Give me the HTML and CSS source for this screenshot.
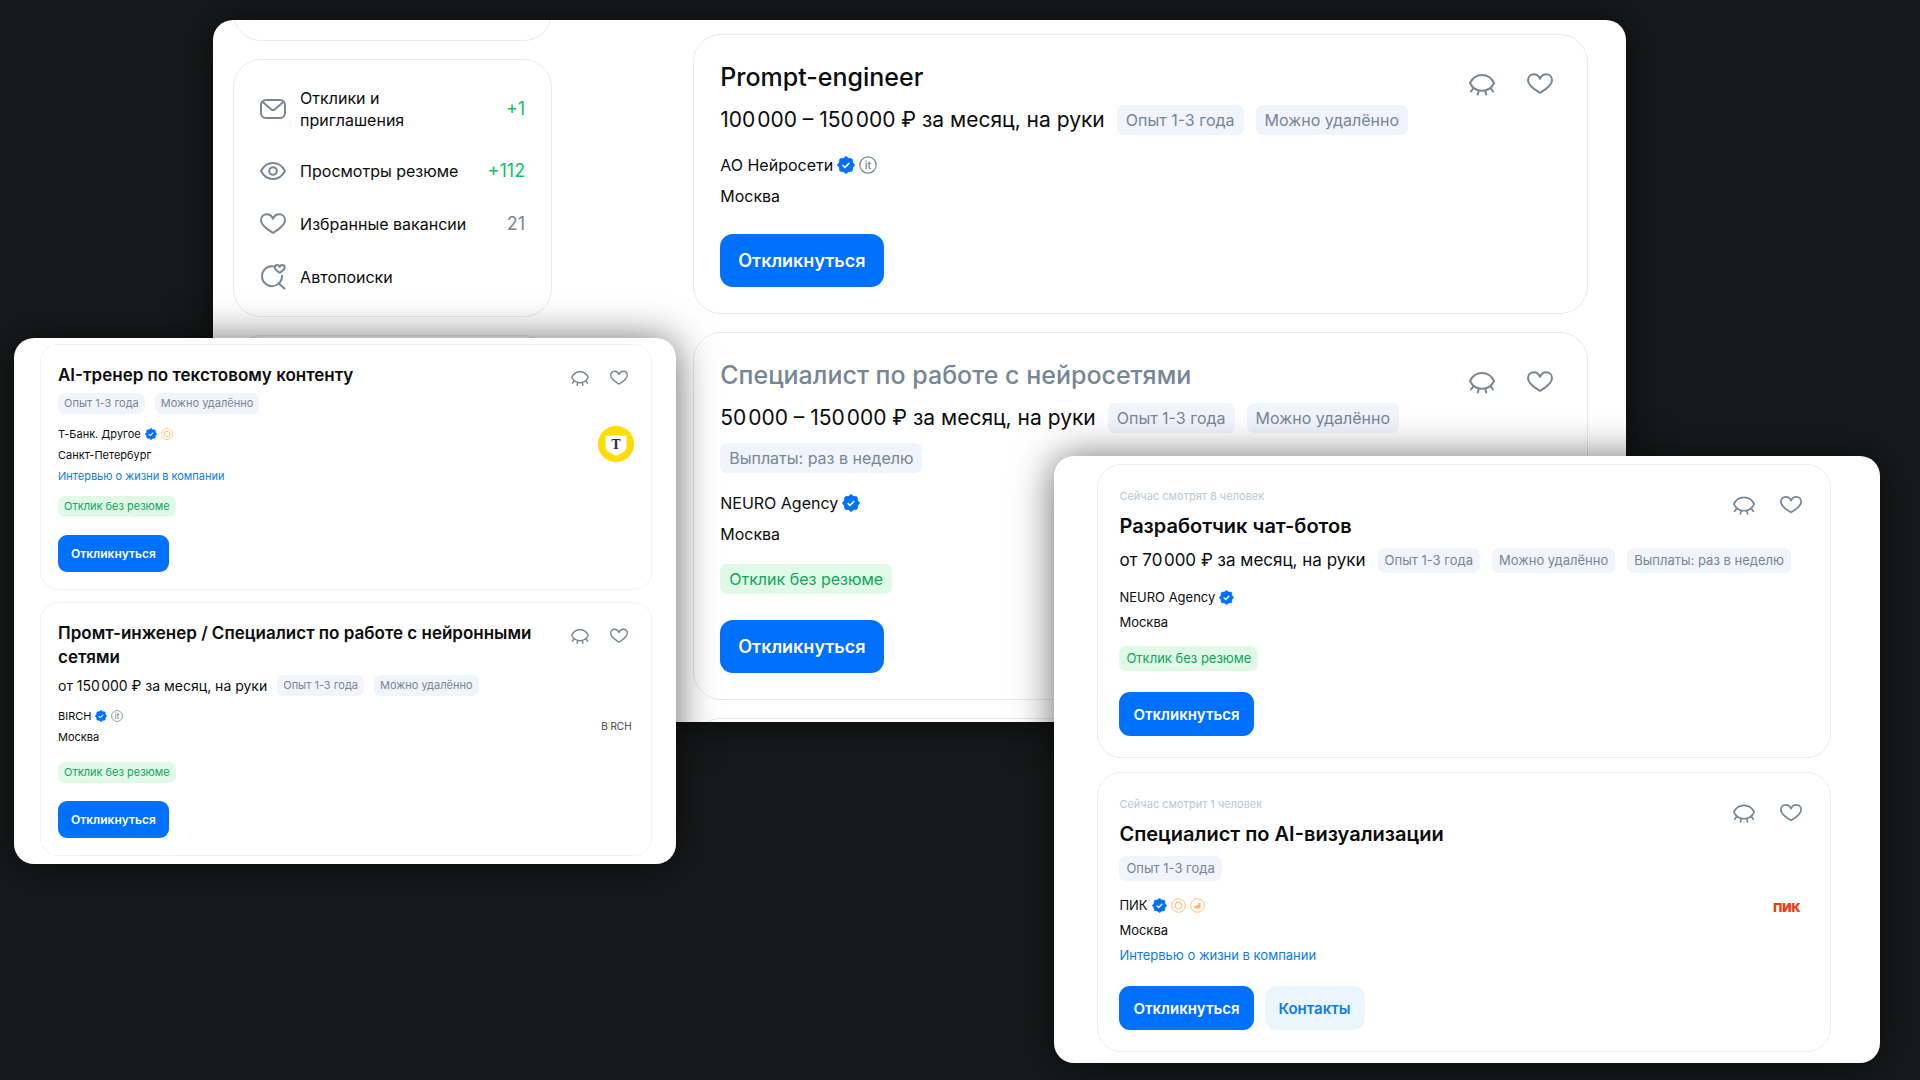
FILE: index.html
```html
<!DOCTYPE html>
<html lang="ru">
<head>
    <meta charset="UTF-8">
    <meta name="viewport" content="width=device-width, initial-scale=1.0">
    <title>Вакансии</title>
    <link rel="stylesheet" href="styles.css">
</head>
<body>
    <!-- Общие иконки -->
    <svg class="sprite" aria-hidden="true">
        <symbol id="i-heart" viewBox="0 0 26 26">
            <path d="M13 21.800C9.300 19.500 1 15.100 1 9.200C1 5.500 3.600 3.300 6.700 3.300C9.600 3.300 11.900 5 13 7.800C14.100 5 16.400 3.300 19.300 3.300C22.400 3.300 25 5.500 25 9.200C25 15.100 16.700 19.500 13 21.800Z"/>
        </symbol>
        <symbol id="i-hide" viewBox="0 0 26 26">
            <path d="M1 12C3.300 7.200 7.800 4 13 4S22.700 7.200 25 12C22.700 16.800 18.200 19.800 13 19.800S3.300 16.800 1 12ZM4.500 17L2 20.500M9.800 19.500L8.800 23.500M16.200 19.500L17.200 23.500M21.500 17L24 20.500"/>
        </symbol>
        <symbol id="i-eye" viewBox="0 0 26 26">
            <path d="M1 13C3.600 8 8 5 13 5S22.400 8 25 13C22.400 18 18 21 13 21S3.600 18 1 13Z"/>
            <circle cx="13" cy="13" r="3.800"/>
        </symbol>
        <symbol id="i-mail" viewBox="0 0 26 26">
            <rect x="1" y="4" width="24" height="18" rx="5"/>
            <path d="M2.500 5.800L11.300 13.400Q13 14.800 14.700 13.400L23.500 5.800"/>
        </symbol>
        <symbol id="i-search" viewBox="0 0 26 26">
            <path d="M13 2.200H11.500A10 10 0 1 0 22 12.500V11.800M18.500 19.300L24.500 24.500"/>
            <path d="M19.700 8.800C17.700 7.600 14.700 5.900 14.700 3.600C14.700 2 15.800 1.100 17.100 1.100C18.300 1.100 19.200 1.800 19.700 2.900C20.200 1.800 21.100 1.100 22.300 1.100C23.600 1.100 24.700 2 24.700 3.600C24.700 5.900 21.700 7.600 19.700 8.800Z"/>
        </symbol>
        <symbol id="i-verified" viewBox="0 0 18 18">
            <path fill="#0070ff" d="M9 .5L11.500 2.500L15 3L15.500 6.500L17.500 9L15.500 11.500L15 15L11.500 15.500L9 17.500L6.500 15.500L3 15L2.500 11.500L.5 9L2.500 6.500L3 3L6.500 2.500Z" stroke="#0070ff" stroke-linejoin="round"/>
            <path d="M5.600 9.100L8 11.400L12.400 7" fill="none" stroke="#fff" stroke-width="1.600"/>
        </symbol>
        <symbol id="i-it" viewBox="0 0 18 18">
            <circle cx="9" cy="9" r="8.200" fill="none" stroke="#768694" stroke-width="1.200"/>
            <text x="9" y="13" text-anchor="middle" font-family="Inter, sans-serif" font-size="11" font-weight="500" fill="#768694">it</text>
        </symbol>
        <symbol id="i-award" viewBox="0 0 18 18">
            <circle cx="9" cy="9" r="8.200" fill="none" stroke="#ffb566"/>
            <circle cx="9" cy="9" r="4" fill="none" stroke="#ffb566" stroke-width="1.600" stroke-dasharray="2.400 .7"/>
        </symbol>
        <symbol id="i-rating" viewBox="0 0 18 18">
            <circle cx="9" cy="9" r="8.200" fill="none" stroke="#ffb566"/>
            <path d="M5 10H7.500V8.500H10V6H12.800V10.500C12.800 12 11.800 12.600 10.500 12.600H5Z" fill="#ffb566"/>
        </symbol>
    </svg>

    <main class="desktop">
        <!-- Основная выдача -->
        <section class="window window-main">
            <aside class="sidebar">
                <div class="peek peek-end"><div class="card"></div></div>
                <nav class="card menu">
                    <a href="#"><svg class="icon"><use href="#i-mail"/></svg><span>Отклики и приглашения</span><b class="plus">+1</b></a>
                    <a href="#"><svg class="icon"><use href="#i-eye"/></svg><span>Просмотры резюме</span><b class="plus">+112</b></a>
                    <a href="#"><svg class="icon"><use href="#i-heart"/></svg><span>Избранные вакансии</span><b>21</b></a>
                    <a href="#"><svg class="icon"><use href="#i-search"/></svg><span>Автопоиски</span></a>
                </nav>
                <div class="peek"><div class="card"></div></div>
            </aside>
            <div class="list">
                <article class="card">
                    <header>
                        <h2>Prompt-engineer</h2>
                        <div class="actions">
                            <button aria-label="Скрыть"><svg class="icon"><use href="#i-hide"/></svg></button>
                            <button aria-label="В избранное"><svg class="icon"><use href="#i-heart"/></svg></button>
                        </div>
                    </header>
                    <div class="tags">
                        <span class="salary">100&hairsp;000 – 150&hairsp;000 ₽ за месяц, на руки</span>
                        <span class="tag">Опыт 1-3 года</span>
                        <span class="tag">Можно удалённо</span>
                    </div>
                    <div class="company">
                        <div class="info">
                            <p>АО Нейросети <svg class="badge"><use href="#i-verified"/></svg><svg class="badge"><use href="#i-it"/></svg></p>
                            <p>Москва</p>
                        </div>
                    </div>
                    <div class="buttons"><button class="btn">Откликнуться</button></div>
                </article>
                <article class="card">
                    <header>
                        <h2 class="visited">Специалист по работе с нейросетями</h2>
                        <div class="actions">
                            <button aria-label="Скрыть"><svg class="icon"><use href="#i-hide"/></svg></button>
                            <button aria-label="В избранное"><svg class="icon"><use href="#i-heart"/></svg></button>
                        </div>
                    </header>
                    <div class="tags">
                        <span class="salary">50&hairsp;000 – 150&hairsp;000 ₽ за месяц, на руки</span>
                        <span class="tag">Опыт 1-3 года</span>
                        <span class="tag">Можно удалённо</span>
                        <span class="tag">Выплаты: раз в неделю</span>
                    </div>
                    <div class="company">
                        <div class="info">
                            <p>NEURO Agency <svg class="badge"><use href="#i-verified"/></svg></p>
                            <p>Москва</p>
                        </div>
                    </div>
                    <span class="tag green">Отклик без резюме</span>
                    <div class="buttons"><button class="btn">Откликнуться</button></div>
                </article>
                <div class="peek"><div class="card"></div></div>
            </div>
        </section>

        <!-- Левое окно -->
        <section class="window window-left">
            <div class="list">
                <article class="card">
                    <header>
                        <h2>AI-тренер по текстовому контенту</h2>
                        <div class="actions">
                            <button aria-label="Скрыть"><svg class="icon"><use href="#i-hide"/></svg></button>
                            <button aria-label="В избранное"><svg class="icon"><use href="#i-heart"/></svg></button>
                        </div>
                    </header>
                    <div class="tags">
                        <span class="tag">Опыт 1-3 года</span>
                        <span class="tag">Можно удалённо</span>
                    </div>
                    <div class="company">
                        <div class="info">
                            <p>Т-Банк. Другое <svg class="badge"><use href="#i-verified"/></svg><svg class="badge"><use href="#i-award"/></svg></p>
                            <p>Санкт-Петербург</p>
                            <p><a href="#">Интервью о жизни в компании</a></p>
                        </div>
                        <svg class="logo" viewBox="0 0 36 36">
                            <circle cx="18" cy="18" r="18" fill="#ffdd00"/>
                            <path d="M7.500 9.500H28.500V20.500C28.500 24 26.500 25.400 24 26.800L18 30L12 26.800C9.500 25.400 7.500 24 7.500 20.500Z" fill="#fff"/>
                            <text x="18" y="22.500" text-anchor="middle" font-family="DejaVu Serif, serif" font-weight="700" font-size="12" fill="#333">T</text>
                        </svg>
                    </div>
                    <span class="tag green">Отклик без резюме</span>
                    <div class="buttons"><button class="btn">Откликнуться</button></div>
                </article>
                <article class="card">
                    <header>
                        <h2>Промт-инженер / Специалист по работе с нейронными сетями</h2>
                        <div class="actions">
                            <button aria-label="Скрыть"><svg class="icon"><use href="#i-hide"/></svg></button>
                            <button aria-label="В избранное"><svg class="icon"><use href="#i-heart"/></svg></button>
                        </div>
                    </header>
                    <div class="tags">
                        <span class="salary">от 150&hairsp;000 ₽ за месяц, на руки</span>
                        <span class="tag">Опыт 1-3 года</span>
                        <span class="tag">Можно удалённо</span>
                    </div>
                    <div class="company">
                        <div class="info">
                            <p>BIRCH <svg class="badge"><use href="#i-verified"/></svg><svg class="badge"><use href="#i-it"/></svg></p>
                            <p>Москва</p>
                        </div>
                        <span class="logo logo-birch">B<i>I</i>RCH</span>
                    </div>
                    <span class="tag green">Отклик без резюме</span>
                    <div class="buttons"><button class="btn">Откликнуться</button></div>
                </article>
            </div>
        </section>

        <!-- Правое окно -->
        <section class="window window-right">
            <div class="list">
                <article class="card">
                    <header>
                        <div>
                            <p class="watching">Сейчас смотрят 8 человек</p>
                            <h2>Разработчик чат-ботов</h2>
                        </div>
                        <div class="actions">
                            <button aria-label="Скрыть"><svg class="icon"><use href="#i-hide"/></svg></button>
                            <button aria-label="В избранное"><svg class="icon"><use href="#i-heart"/></svg></button>
                        </div>
                    </header>
                    <div class="tags">
                        <span class="salary">от 70&hairsp;000 ₽ за месяц, на руки</span>
                        <span class="tag">Опыт 1-3 года</span>
                        <span class="tag">Можно удалённо</span>
                        <span class="tag">Выплаты: раз в неделю</span>
                    </div>
                    <div class="company">
                        <div class="info">
                            <p>NEURO Agency <svg class="badge"><use href="#i-verified"/></svg></p>
                            <p>Москва</p>
                        </div>
                    </div>
                    <span class="tag green">Отклик без резюме</span>
                    <div class="buttons"><button class="btn">Откликнуться</button></div>
                </article>
                <article class="card">
                    <header>
                        <div>
                            <p class="watching">Сейчас смотрит 1 человек</p>
                            <h2>Специалист по AI-визуализации</h2>
                        </div>
                        <div class="actions">
                            <button aria-label="Скрыть"><svg class="icon"><use href="#i-hide"/></svg></button>
                            <button aria-label="В избранное"><svg class="icon"><use href="#i-heart"/></svg></button>
                        </div>
                    </header>
                    <div class="tags">
                        <span class="tag">Опыт 1-3 года</span>
                    </div>
                    <div class="company">
                        <div class="info">
                            <p>ПИК <svg class="badge"><use href="#i-verified"/></svg><svg class="badge"><use href="#i-award"/></svg><svg class="badge"><use href="#i-rating"/></svg></p>
                            <p>Москва</p>
                            <p><a href="#">Интервью о жизни в компании</a></p>
                        </div>
                        <span class="logo logo-pik">ПИК</span>
                    </div>
                    <div class="buttons">
                        <button class="btn">Откликнуться</button>
                        <button class="btn btn-light">Контакты</button>
                    </div>
                </article>
            </div>
        </section>
    </main>
</body>
</html>
```

FILE: styles.css
```css
* {
    box-sizing: border-box;
}

body {
    margin: 0;
    background-color: #17191a;
    color: #0b0c0d;
    font-family: Inter, "Noto Sans", sans-serif;
}

h2, p {
    margin: 0;
}

a {
    color: #0b7bea;
    text-decoration: none;
}

button {
    font-family: inherit;
    border: none;
    cursor: pointer;
}

.sprite {
    display: none;
}

.desktop {
    position: relative;
    min-height: 100vh;
    overflow: hidden;
}

/* Окна */
.window {
    position: absolute;
    background-color: #fff;
    border-radius: 20px;
    overflow: hidden;
    box-shadow: 0 2px 40px rgba(0, 0, 0, 0.6);
}

.window-main {
    --title: 25px;
    --title-weight: 500;
    --title-line: 32px;
    --title-gap: 12px;
    --salary: 21px;
    --text: 16px;
    --text-line: 24px;
    --text-gap: 7px;
    --tag-height: 30px;
    --tag-pad: 9px;
    --tag-gap: 10px 12px;
    --block-gap: 18px;
    --btn-gap: 26px;
    --btn-text: 18px;
    --btn-height: 53px;
    --btn-pad: 18px;
    --btn-radius: 13px;
    --icon: 26px;
    --icon-gap: 32px;
    --icon-top: 10px;
    --icon-right: 8px;
    --badge: 18px;
    --card-pad: 26px;
    --card-gap: 18px;
    --card-radius: 28px;
    --card-border: #e6eaed;
    top: 20px;
    left: 11.1%;
    width: 73.6%;
    display: flex;
    justify-content: space-between;
    padding: 0 38px 0 20px;
    border-radius: 20px 20px 0 0;
}

.window-left {
    --title: 17px;
    --title-weight: 600;
    --title-line: 24px;
    --title-gap: 6px;
    --salary: 14px;
    --text: 11px;
    --text-line: 16px;
    --text-gap: 5px;
    --tag-height: 21px;
    --tag-pad: 6px;
    --tag-gap: 6px 10px;
    --block-gap: 12px;
    --btn-gap: 18px;
    --btn-text: 12px;
    --btn-height: 37px;
    --btn-pad: 13px;
    --btn-radius: 9px;
    --icon: 18px;
    --icon-gap: 21px;
    --icon-top: 6px;
    --icon-right: 6px;
    --badge: 12px;
    --card-pad: 18px 17px 17px;
    --card-gap: 12px;
    --card-radius: 18px;
    --card-border: #f0f2f4;
    top: 338px;
    left: 14px;
    width: 34.5%;
    padding: 6px 24px 8px 26px;
}

.window-right {
    --title: 20px;
    --title-weight: 600;
    --title-line: 26px;
    --title-gap: 9px;
    --salary: 17px;
    --text: 13px;
    --text-line: 20px;
    --text-gap: 5px;
    --tag-height: 25px;
    --tag-pad: 7px;
    --tag-gap: 8px 12px;
    --block-gap: 14px;
    --btn-gap: 21px;
    --btn-text: 15px;
    --btn-height: 44px;
    --btn-pad: 14px;
    --btn-radius: 11px;
    --icon: 22px;
    --icon-gap: 25px;
    --icon-top: 8px;
    --icon-right: 7px;
    --badge: 15px;
    --card-pad: 21px;
    --card-gap: 14px;
    --card-radius: 24px;
    --card-border: #ebedf0;
    top: 456px;
    right: 40px;
    width: 43%;
    padding: 8px 49px 11px 43px;
}

.list {
    display: flex;
    flex-direction: column;
    gap: var(--card-gap);
}

.window-main .list {
    width: 895px;
    padding-top: 14px;
}

/* Карточка вакансии */
.card {
    border: 1px solid var(--card-border);
    border-radius: var(--card-radius);
    padding: var(--card-pad);
}

.card header {
    display: flex;
    justify-content: space-between;
    align-items: flex-start;
}

.card h2 {
    font-size: var(--title);
    line-height: var(--title-line);
    font-weight: var(--title-weight);
    padding-bottom: var(--title-gap);
}

.card h2.visited {
    color: #768694;
}

.watching {
    font-size: 11px;
    line-height: 20px;
    margin-bottom: 7px;
    color: #bcc6cf;
}

.actions {
    display: flex;
    flex-shrink: 0;
    gap: var(--icon-gap);
    margin: var(--icon-top) var(--icon-right) 0 0;
}

.actions button {
    display: flex;
    padding: 0;
    background: none;
}

.icon {
    width: var(--icon);
    height: var(--icon);
    fill: none;
    stroke: #768694;
    stroke-width: 2;
    stroke-linecap: round;
    stroke-linejoin: round;
}

.tags {
    display: flex;
    flex-wrap: wrap;
    align-items: center;
    gap: var(--tag-gap);
}

.salary {
    font-size: var(--salary);
    line-height: var(--tag-height);
}

.tag {
    height: var(--tag-height);
    line-height: var(--tag-height);
    padding: 0 var(--tag-pad);
    border-radius: 7px;
    background-color: #f1f4fc;
    color: #768694;
    font-size: var(--text);
}

.tag.green {
    display: inline-block;
    vertical-align: top;
    margin-top: var(--block-gap);
    background-color: #e1fae8;
    color: #0da65a;
}

.company {
    display: flex;
    justify-content: space-between;
    margin-top: var(--block-gap);
}

.info {
    display: flex;
    flex-direction: column;
    gap: var(--text-gap);
    font-size: var(--text);
    line-height: var(--text-line);
}

.info p {
    display: flex;
    align-items: center;
    gap: 4px;
}

.badge {
    width: var(--badge);
    height: var(--badge);
}

.logo {
    width: 36px;
    height: 36px;
    line-height: 36px;
    text-align: center;
}

.window-left .company {
    min-height: 42px;
}

.logo-birch {
    font-size: 10px;
    color: #3c4043;
}

.logo-birch i {
    font-style: normal;
    color: #d8ee86;
}

.logo-pik {
    width: 44px;
    line-height: 26px;
    font-size: 12px;
    font-weight: 900;
    color: #f23d0c;
}

.buttons {
    display: flex;
    gap: 11px;
    margin-top: var(--btn-gap);
}

.btn {
    height: var(--btn-height);
    padding: 0 var(--btn-pad);
    border-radius: var(--btn-radius);
    background-color: #0070ff;
    color: #fff;
    font-size: var(--btn-text);
    font-weight: 600;
}

.btn-light {
    background-color: #ebf5ff;
    color: #0b7bea;
}

/* Боковое меню */
.sidebar {
    width: 319px;
    display: flex;
    flex-direction: column;
    gap: var(--card-gap);
}

.menu {
    display: flex;
    flex-direction: column;
    gap: 27px;
    padding: 27px 26px 26px;
}

.menu a {
    display: flex;
    align-items: center;
    color: inherit;
    font-size: var(--text);
    line-height: 22px;
}

.menu span {
    max-width: 172px;
}

.menu .icon {
    flex-shrink: 0;
    margin-right: 14px;
}

.menu b {
    margin-left: auto;
    font-size: 18px;
    font-weight: 400;
    color: #768694;
}

.menu .plus {
    color: #0dc267;
}

/* Края соседних карточек, обрезанные окном */
.peek {
    display: flex;
    height: 4px;
    overflow: hidden;
}

.peek .card {
    flex: 1;
    height: 80px;
}

.peek-end {
    height: 21px;
    align-items: flex-end;
}
```
